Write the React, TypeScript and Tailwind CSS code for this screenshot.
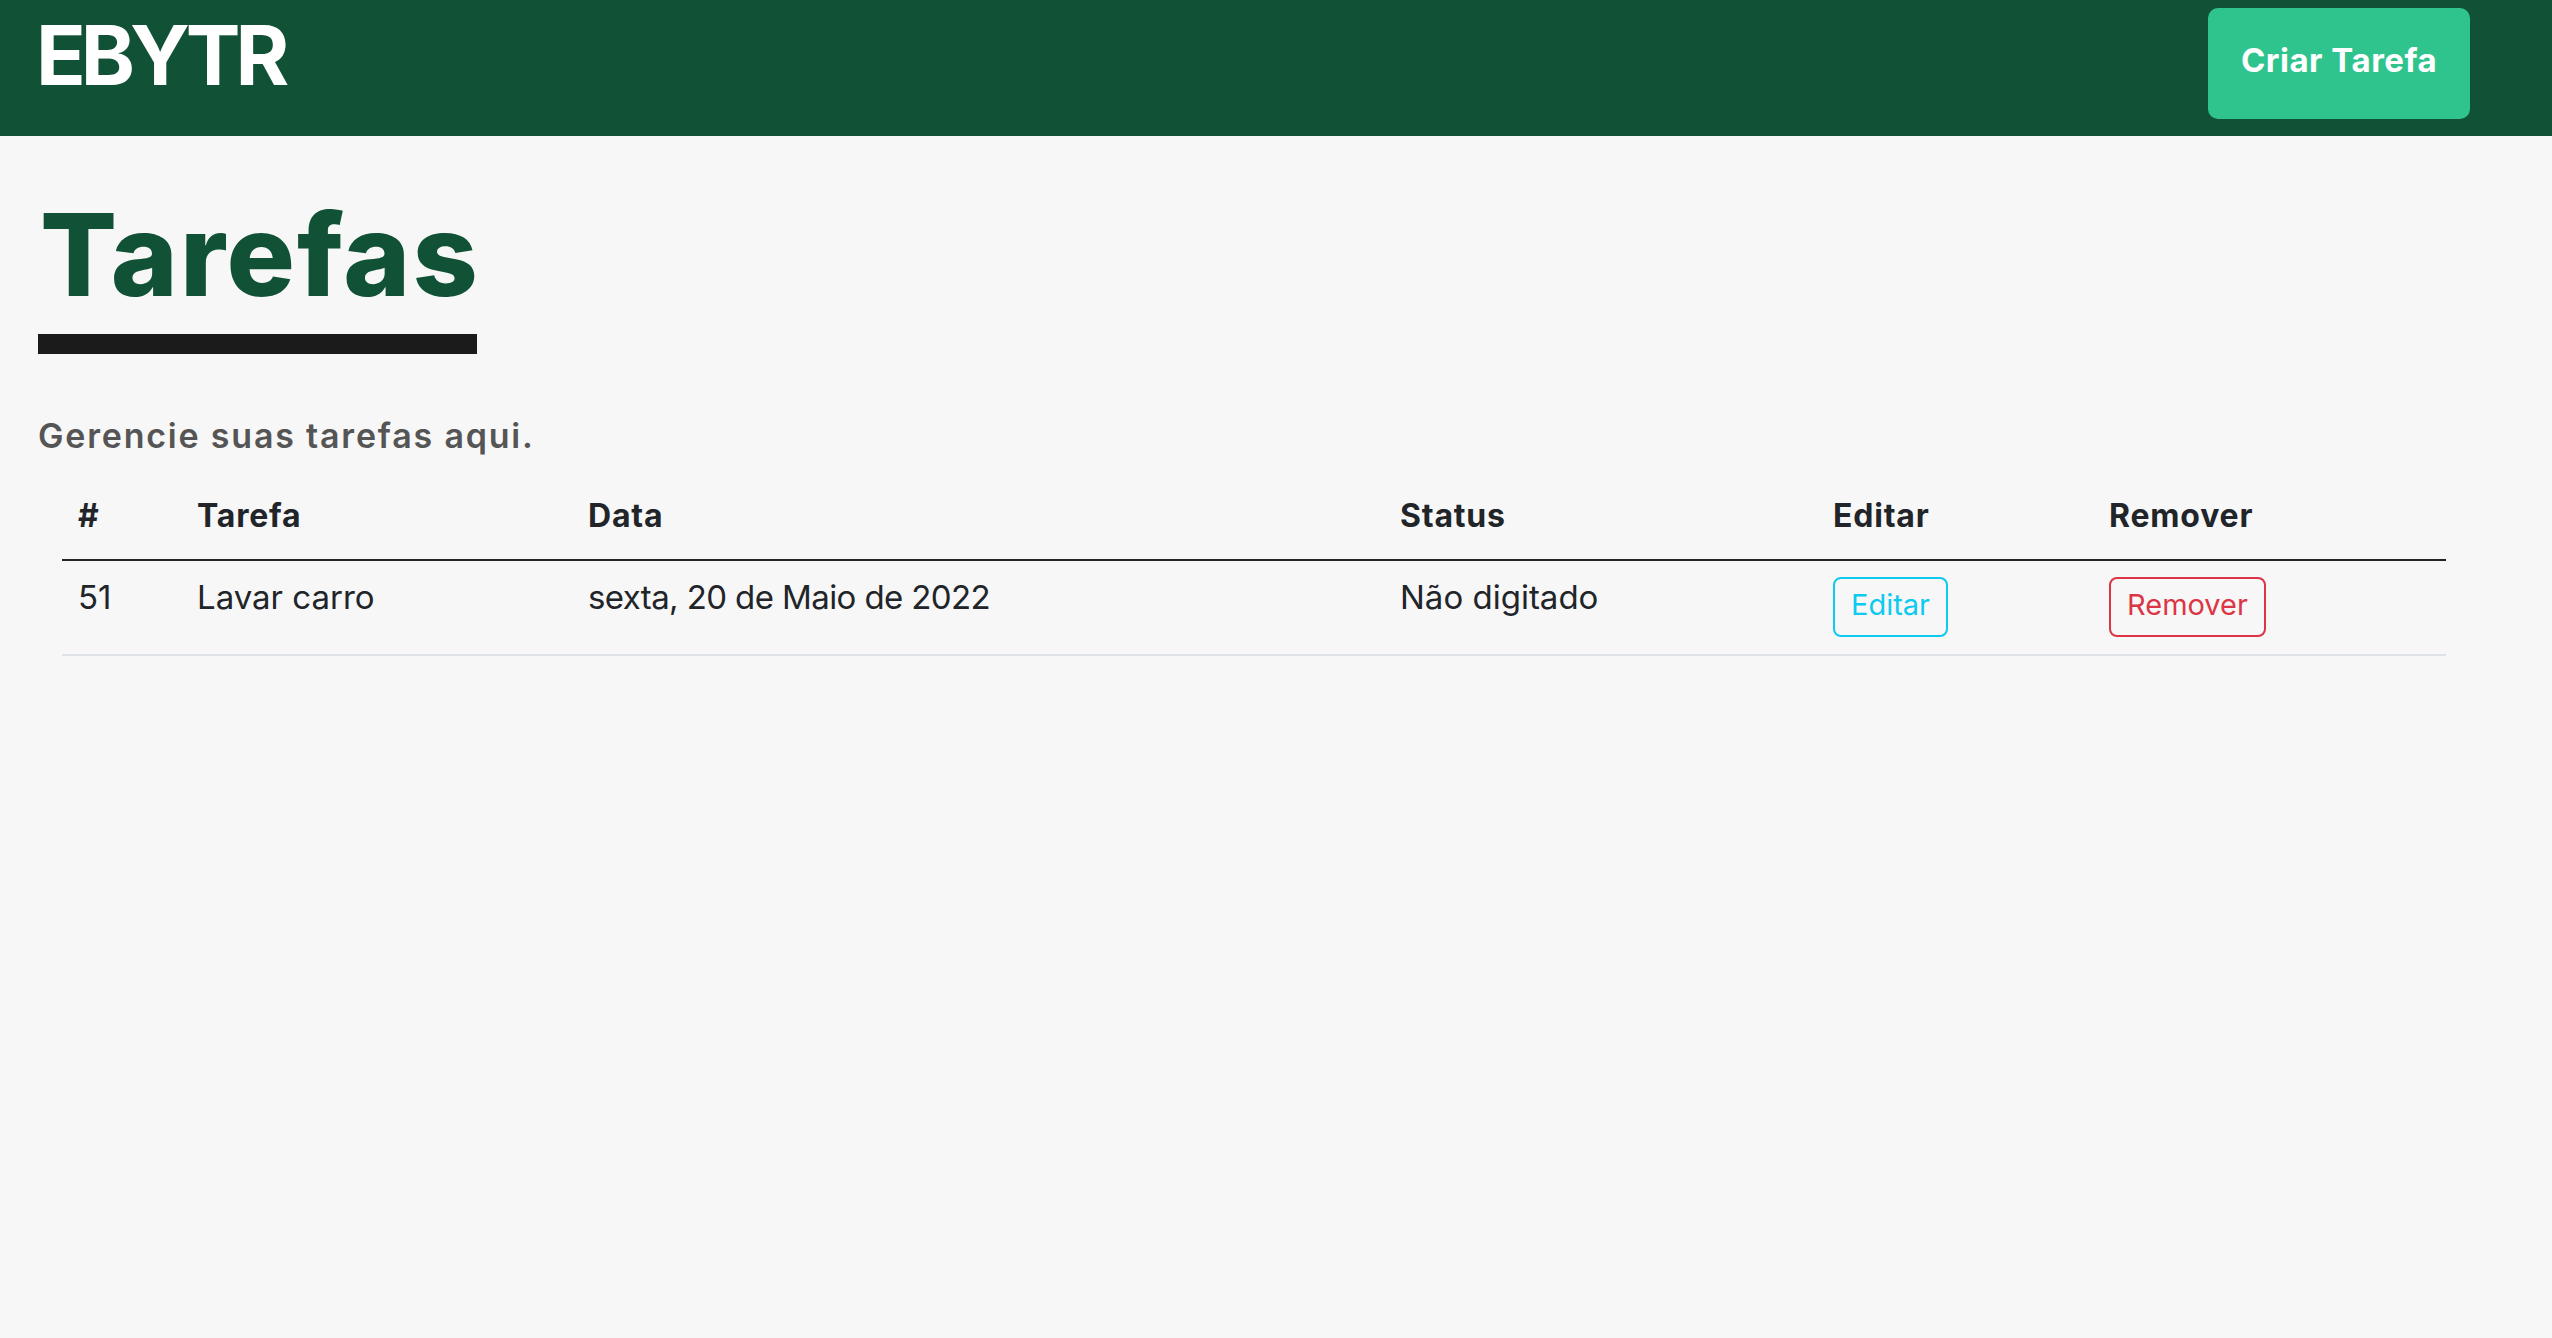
import React from "react";

const font = { fontFamily: "Inter, 'Liberation Sans', sans-serif" };

export default function App() {
  return (
    <div className="min-h-screen w-full bg-[#f7f7f7] text-[#212529]" style={font}>
      <header className="flex h-[136px] items-start justify-between bg-[#115236] pl-[36px] pr-[82px] pt-[8px]">
        <div className="mt-[7px] text-[82px] font-bold leading-[82px] tracking-[-5px] text-white">
          EBYTR
        </div>
        <button className="h-[111px] w-[262px] rounded-[10px] bg-[#2fc48d] pb-[5px] text-[33px] font-bold tracking-[0.5px] text-white">
          Criar Tarefa
        </button>
      </header>

      <main className="pl-[38px] pr-[106px]">
        <div className="mt-[62px] inline-block">
          <h1 className="px-[2px] text-[114px] font-extrabold leading-[114px] tracking-[2px] text-[#115236]">
            Tarefas
          </h1>
          <div className="mt-[22px] h-[20px] w-[439px] bg-[#1b1b1b]" />
        </div>

        <p className="mt-[56px] text-[34px] font-semibold leading-[51px] tracking-[1.8px] text-[#555555]">
          Gerencie suas tarefas aqui.
        </p>

        <div className="mt-[18px] pl-[24px]">
          <table className="w-[2384px] table-fixed border-collapse text-left">
            <thead>
              <tr className="border-b-2 border-[#212529]">
                <th className="w-[119px] pb-[23px] pl-[16px] pt-[17px] text-[32px] font-bold leading-[40px] tracking-[0.8px]">#</th>
                <th className="w-[391px] pb-[23px] pl-[16px] pt-[17px] text-[32px] font-bold leading-[40px] tracking-[0.8px]">Tarefa</th>
                <th className="w-[812px] pb-[23px] pl-[16px] pt-[17px] text-[32px] font-bold leading-[40px] tracking-[0.8px]">Data</th>
                <th className="w-[433px] pb-[23px] pl-[16px] pt-[17px] text-[32px] font-bold leading-[40px] tracking-[0.8px]">Status</th>
                <th className="w-[276px] pb-[23px] pl-[16px] pt-[17px] text-[32px] font-bold leading-[40px] tracking-[0.8px]">Editar</th>
                <th className="w-[353px] pb-[23px] pl-[16px] pt-[17px] text-[32px] font-bold leading-[40px] tracking-[0.8px]">Remover</th>
              </tr>
            </thead>
            <tbody>
              <tr className="border-b-2 border-[#dee2e6]">
                <td className="h-[95px] pl-[16px] pt-[16px] align-top text-[33px] font-normal leading-[40px]">51</td>
                <td className="pl-[16px] pt-[16px] align-top text-[33px] font-normal leading-[40px]">Lavar carro</td>
                <td className="pl-[16px] pt-[16px] align-top text-[33px] font-normal leading-[40px] tracking-[-0.6px]">sexta, 20 de Maio de 2022</td>
                <td className="pl-[16px] pt-[16px] align-top text-[33px] font-normal leading-[40px]">Não digitado</td>
                <td className="pl-[16px] pt-[16px] align-top">
                  <button className="flex h-[60px] items-center rounded-[8px] border-2 border-[#0dcaf0] px-[16px] pb-[5px] text-[29px] leading-[40px] text-[#0dcaf0]">
                    Editar
                  </button>
                </td>
                <td className="pl-[16px] pt-[16px] align-top">
                  <button className="flex h-[60px] items-center rounded-[8px] border-2 border-[#dc3545] px-[16px] pb-[5px] text-[29px] leading-[40px] text-[#dc3545]">
                    Remover
                  </button>
                </td>
              </tr>
            </tbody>
          </table>
        </div>
      </main>
    </div>
  );
}
